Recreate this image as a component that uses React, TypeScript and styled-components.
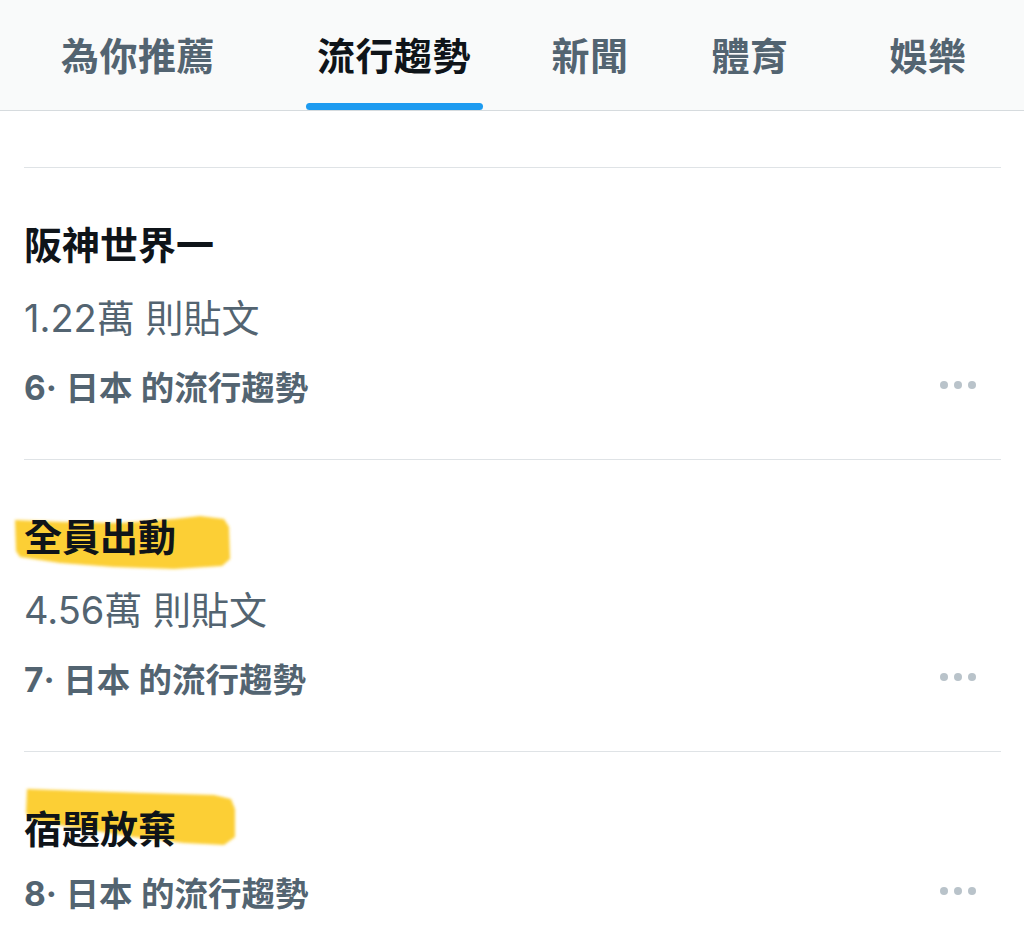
import styled, { createGlobalStyle } from 'styled-components';

interface Trend {
  rank: number;
  title: string;
  posts?: string;
  mark?: string;
}

const tabs = [
  { label: '為你推薦', width: 276 },
  { label: '流行趨勢', width: 236, active: true },
  { label: '新聞', width: 156 },
  { label: '體育', width: 164 },
  { label: '娛樂', width: 192 },
];

// yellow marker strokes, drawn relative to the title line
const marks: Record<string, string> = {
  a: 'M-9 16 L40 18 L96 19 L150 15 L176 12 L200 15 L205 23 L206 55 L198 62 L150 65 L90 63 L36 59 L-4 53 L-8 47 Z',
  b: 'M3 -7 L60 -5 L120 -3 L190 -1 L207 3 L211 13 L211 41 L200 49 L160 47 L110 41 L60 33 L10 25 L2 17 Z',
};

const trends: Trend[] = [
  { rank: 6, title: '阪神世界一', posts: '1.22萬 則貼文' },
  { rank: 7, title: '全員出動', posts: '4.56萬 則貼文', mark: 'a' },
  { rank: 8, title: '宿題放棄', mark: 'b' },
];

function App() {
  return (
    <>
      <GlobalStyle />
      <Page>
        <TabBar>
          {tabs.map((t) => (
            <Tab key={t.label} $width={t.width} $active={!!t.active}>
              <TabLabel>{t.label}</TabLabel>
              <Indicator $show={!!t.active} />
            </Tab>
          ))}
        </TabBar>
        <List>
          {trends.map((t) => (
            <Item key={t.rank}>
              <Title>
                {t.mark && (
                  <Marker viewBox="-20 -20 260 100" width="260" height="100">
                    <defs>
                      <filter id={`soft-${t.mark}`}>
                        <feGaussianBlur stdDeviation="1.6" />
                      </filter>
                    </defs>
                    <path d={marks[t.mark]} fill="#fccf34" filter={`url(#soft-${t.mark})`} />
                  </Marker>
                )}
                <TitleText>{t.title}</TitleText>
              </Title>
              {t.posts && <Posts>{t.posts}</Posts>}
              <Meta>
                <span>
                  <Rank>{t.rank}·</Rank> 日本 的流行趨勢
                </span>
                <Dots>
                  <Dot />
                  <Dot />
                  <Dot />
                </Dots>
              </Meta>
            </Item>
          ))}
        </List>
      </Page>
    </>
  );
}

export default App;

const GlobalStyle = createGlobalStyle`
  html, body {
    margin: 0;
    padding: 0;
    background: #fff;
  }
  body {
    font-family: Inter, "Noto Sans CJK TC", "Noto Sans", sans-serif;
    -webkit-font-smoothing: antialiased;
  }
`;

const Page = styled.div`
  width: 1024px;
  height: 946px;
  overflow: hidden;
  background: #fff;
`;

const TabBar = styled.div`
  display: flex;
  height: 110px;
  background: #f9fafa;
  border-bottom: 1px solid #d6dbde;
`;

const Tab = styled.div<{ $width: number; $active: boolean }>`
  width: ${(p) => p.$width}px;
  display: flex;
  flex-direction: column;
  align-items: center;
  padding-top: 3px;
  box-sizing: border-box;
  color: ${(p) => (p.$active ? '#0f1419' : '#536471')};
`;

const TabLabel = styled.div`
  flex: 1;
  display: flex;
  align-items: center;
  font-size: 38px;
  font-weight: 700;
  letter-spacing: 0.5px;
`;

const Indicator = styled.div<{ $show: boolean }>`
  width: 177px;
  height: 7px;
  border-radius: 4px;
  background: ${(p) => (p.$show ? '#1d9bf0' : 'transparent')};
`;

const List = styled.div`
  padding-top: 56px;
`;

const Item = styled.div`
  margin: 0 23px 0 24px;
  padding: 44px 0 45px;
  border-top: 1px solid #dfe3e6;
`;

const Title = styled.div`
  position: relative;
  isolation: isolate;
  height: 66px;
  box-sizing: border-box;
  padding-bottom: 6px;
  display: flex;
  align-items: center;
  font-size: 38px;
  font-weight: 700;
  color: #0f1419;
`;

const TitleText = styled.span`
  position: relative;
  z-index: 1;
`;

const Marker = styled.svg`
  position: absolute;
  left: -20px;
  top: -20px;
  z-index: 0;
  overflow: visible;
`;

const Posts = styled.div`
  height: 74px;
  display: flex;
  align-items: center;
  font-size: 38px;
  font-weight: 400;
  color: #536471;
`;

const Meta = styled.div`
  height: 58px;
  display: flex;
  align-items: center;
  justify-content: space-between;
  font-size: 33.5px;
  font-weight: 600;
  color: #536471;

  ${Posts} + & {
    margin-top: 4px;
  }
`;

const Rank = styled.span`
  font-weight: 700;
`;

const Dots = styled.div`
  display: flex;
  gap: 6px;
  margin-right: 25px;
`;

const Dot = styled.span`
  width: 8px;
  height: 8px;
  border-radius: 50%;
  background: #b9c3ca;
`;
